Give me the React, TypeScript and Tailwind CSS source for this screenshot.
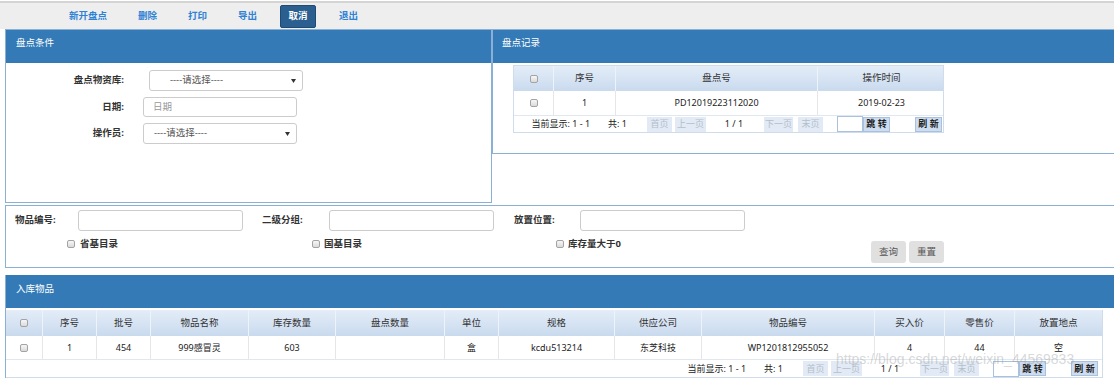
import React from "react";

const font = "font-['Noto_Sans','Noto_Sans_CJK_SC',sans-serif]";

function Check() {
  return (
    <span className="inline-block shrink-0 w-[8px] h-[8px] rounded-[2px] border border-[#a3a3a3] bg-gradient-to-b from-[#f7f7f7] to-[#dadada]" />
  );
}

function Caret() {
  return (
    <svg width="5" height="4" viewBox="0 0 5 4">
      <path d="M0 0 L5 0 L2.5 4 Z" fill="#333" />
    </svg>
  );
}

function PagerBtn({ children, on, className }: { children: React.ReactNode; on?: boolean; className: string }) {
  return (
    <span
      className={`${className} shrink-0 h-[15px] flex items-center justify-center text-[9px] ${
        on
          ? "bg-[#cddcef] border border-[#aac1dd] text-[#1f1f1f] font-bold"
          : "bg-[#e1eaf5] text-[#b4bdca]"
      }`}
    >
      {children}
    </span>
  );
}

function Pager({ pr }: { pr: string }) {
  return (
    <div className={`flex items-center justify-end h-full text-[9px] text-[#222] ${pr}`}>
      <span>当前显示: 1 - 1</span>
      <span className="ml-[18px]">共: 1</span>
      <PagerBtn className="ml-[20px] w-[25px]">首页</PagerBtn>
      <PagerBtn className="ml-[3px] w-[31px]">上一页</PagerBtn>
      <span className="ml-[18px] w-[20px] text-center">1 / 1</span>
      <PagerBtn className="ml-[20px] w-[29px]">下一页</PagerBtn>
      <PagerBtn className="ml-[5px] w-[25px]">末页</PagerBtn>
      <span className="ml-[14px] w-[26px] h-[16px] bg-white border border-[#a9c1de]" />
      <PagerBtn on className="w-[27px]">跳 转</PagerBtn>
      <PagerBtn on className="ml-[25px] w-[27px]">刷 新</PagerBtn>
    </div>
  );
}

const headGrad = "bg-gradient-to-b from-[#e4edf8] to-[#c9daee]";

function RecordTable() {
  const cols = "grid grid-cols-[40px_62px_202px_127px]";
  const heads = ["序号", "盘点号", "操作时间"];
  const row = ["1", "PD12019223112020", "2019-02-23"];
  return (
    <div className="w-[431px] border border-[#cfdcec] ml-[20px] mt-[2px]">
      <div className={`${cols} h-[25px] ${headGrad} text-[9.5px] text-[#333]`}>
        <div className="flex items-center justify-center border-r border-[#eef3f9]">
          <Check />
        </div>
        {heads.map((h, i) => (
          <div key={h} className={`flex items-center justify-center ${i < 2 ? "border-r border-[#eef3f9]" : ""}`}>
            {h}
          </div>
        ))}
      </div>
      <div className={`${cols} h-[24px] bg-white text-[9px] text-[#222]`}>
        <div className="flex items-center justify-center border-r border-[#e6e6e6]">
          <Check />
        </div>
        {row.map((c, i) => (
          <div key={i} className={`flex items-center justify-center ${i < 2 ? "border-r border-[#e6e6e6]" : ""}`}>
            {c}
          </div>
        ))}
      </div>
      <div className="h-[17px] border-t border-[#dfe7f1] bg-white">
        <Pager pr="pr-[1px]" />
      </div>
    </div>
  );
}

const goodsCols =
  "grid grid-cols-[37px_54px_54px_98px_87px_109px_54px_116px_87px_173px_70px_70px_87px]";
const goodsHeads = ["序号", "批号", "物品名称", "库存数量", "盘点数量", "单位", "规格", "供应公司", "物品编号", "买入价", "零售价", "放置地点"];
const goodsRow = ["1", "454", "999感冒灵", "603", "", "盒", "kcdu513214", "东芝科技", "WP1201812955052", "4", "44", "空"];

function GoodsTable() {
  return (
    <div className="w-[1097px] mt-[2px] border-r border-b border-[#cfdcec]">
      <div className={`${goodsCols} h-[26px] ${headGrad} text-[9.5px] text-[#333]`}>
        <div className="flex items-center justify-center border-r border-[#eef3f9]">
          <Check />
        </div>
        {goodsHeads.map((h, i) => (
          <div
            key={h}
            className={`flex items-center justify-center ${i < goodsHeads.length - 1 ? "border-r border-[#eef3f9]" : ""}`}
          >
            {h}
          </div>
        ))}
      </div>
      <div className={`${goodsCols} h-[23px] bg-white text-[9px] text-[#222]`}>
        <div className="flex items-center justify-center border-r border-[#e6e6e6]">
          <Check />
        </div>
        {goodsRow.map((c, i) => (
          <div
            key={i}
            className={`flex items-center justify-center ${i < goodsRow.length - 1 ? "border-r border-[#e6e6e6]" : ""}`}
          >
            {c}
          </div>
        ))}
      </div>
      <div className="h-[18px] border-t border-[#dfe7f1] bg-white">
        <Pager pr="pr-[4px]" />
      </div>
    </div>
  );
}

function Field({ label, children, labelW }: { label: string; children: React.ReactNode; labelW: string }) {
  return (
    <div className="flex items-center">
      <span className={`${labelW} font-bold text-[9.5px] text-[#333]`}>{label}</span>
      {children}
    </div>
  );
}

export default function App() {
  const inputCls = "h-[21px] w-[165px] bg-white border border-[#cccccc] rounded-[3px]";
  return (
    <div className={`w-[1114px] h-[378px] overflow-hidden bg-white relative whitespace-nowrap ${font}`}>
      {/* toolbar */}
      <div className="mt-[1px] h-[28px] border-t-2 border-[#d4d4d4] bg-[#eeeeee] flex items-center pl-[61px] gap-[15px] text-[9.5px] font-bold text-[#2f82d4]">
        {["新开盘点", "删除", "打印", "导出"].map((t) => (
          <span key={t} className="px-[8px]">{t}</span>
        ))}
        <span className="w-[36px] h-[23px] flex items-center justify-center rounded-[2px] bg-[#2a5f90] border border-[#1f4b73] text-white">
          取消
        </span>
        <span className="px-[8px]">退出</span>
      </div>

      {/* condition + record */}
      <div className="flex pl-[5px] items-start">
        <div className="w-[487px] h-[174px] border border-[#8ab0d6] shrink-0">
          <div className="h-[33px] bg-[#337ab7] pl-[10px] pt-[7px] text-[9.5px] leading-[12px] text-white">盘点条件</div>
          <div className="flex flex-col gap-[6px] pt-[7px]">
            <div className="flex items-center">
              <span className="w-[118px] text-right font-bold text-[9.5px] text-[#333]">盘点物资库:</span>
              <div className="ml-[25px] w-[154px] h-[21px] border border-[#cccccc] rounded-[3px] flex items-center justify-between pl-[20px] pr-[6px] text-[9.5px] text-[#555]">
                <span>----请选择----</span>
                <Caret />
              </div>
            </div>
            <div className="flex items-center">
              <span className="w-[118px] text-right font-bold text-[9.5px] text-[#333]">日期:</span>
              <div className="ml-[19px] w-[154px] h-[20px] border border-[#cccccc] rounded-[3px] flex items-center pl-[9px] text-[9.5px] text-[#999]">
                日期
              </div>
            </div>
            <div className="flex items-center">
              <span className="w-[118px] text-right font-bold text-[9.5px] text-[#333]">操作员:</span>
              <div className="ml-[19px] w-[154px] h-[21px] border border-[#cccccc] rounded-[3px] flex items-center justify-between pl-[10px] pr-[6px] text-[9.5px] text-[#555]">
                <span>----请选择----</span>
                <Caret />
              </div>
            </div>
          </div>
        </div>
        <div className="flex-1 h-[125px] border-t border-l border-b border-[#8ab0d6]">
          <div className="h-[33px] bg-[#337ab7] pl-[9px] pt-[7px] text-[9.5px] leading-[12px] text-white">盘点记录</div>
          <RecordTable />
        </div>
      </div>

      {/* filters */}
      <div className="ml-[5px] mt-[2px] h-[63px] border-y border-l border-[#8ab0d6] pl-[9px]">
        <div className="flex items-center pt-[4px]">
          <Field label="物品编号:" labelW="w-[63px]">
            <span className={inputCls} />
          </Field>
          <div className="ml-[19px]">
            <Field label="二级分组:" labelW="w-[67px]">
              <span className={inputCls} />
            </Field>
          </div>
          <div className="ml-[20px]">
            <Field label="放置位置:" labelW="w-[66px]">
              <span className={inputCls} />
            </Field>
          </div>
        </div>
        <div className="flex items-start mt-[7px] text-[9.5px] font-bold text-[#333] leading-[12px]">
          <span className="ml-[52px] flex items-center gap-[5px]">
            <Check />
            省基目录
          </span>
          <span className="ml-[194px] flex items-center gap-[4px]">
            <Check />
            国基目录
          </span>
          <span className="ml-[194px] flex items-center gap-[4px]">
            <Check />
            库存量大于0
          </span>
          <span className="ml-[250px] mt-[3px] w-[35px] h-[22px] rounded-[3px] bg-[#e0e0e0] flex items-center justify-center font-normal text-[#555]">
            查询
          </span>
          <span className="ml-[3px] mt-[3px] w-[35px] h-[22px] rounded-[3px] bg-[#e0e0e0] flex items-center justify-center font-normal text-[#555]">
            重置
          </span>
        </div>
      </div>

      {/* goods */}
      <div className="ml-[5px] mt-[7px] border-l border-[#8ab0d6]">
        <div className="h-[33px] bg-[#337ab7] pl-[10px] pt-[8px] text-[9.5px] leading-[12px] text-white">入库物品</div>
        <GoodsTable />
      </div>

      <span className="absolute left-[836px] top-[349px] text-[14px] font-['Liberation_Sans',sans-serif] text-[#9a9a9a]/40 pointer-events-none">
        https://blog.csdn.net/weixin_44569833
      </span>
    </div>
  );
}
